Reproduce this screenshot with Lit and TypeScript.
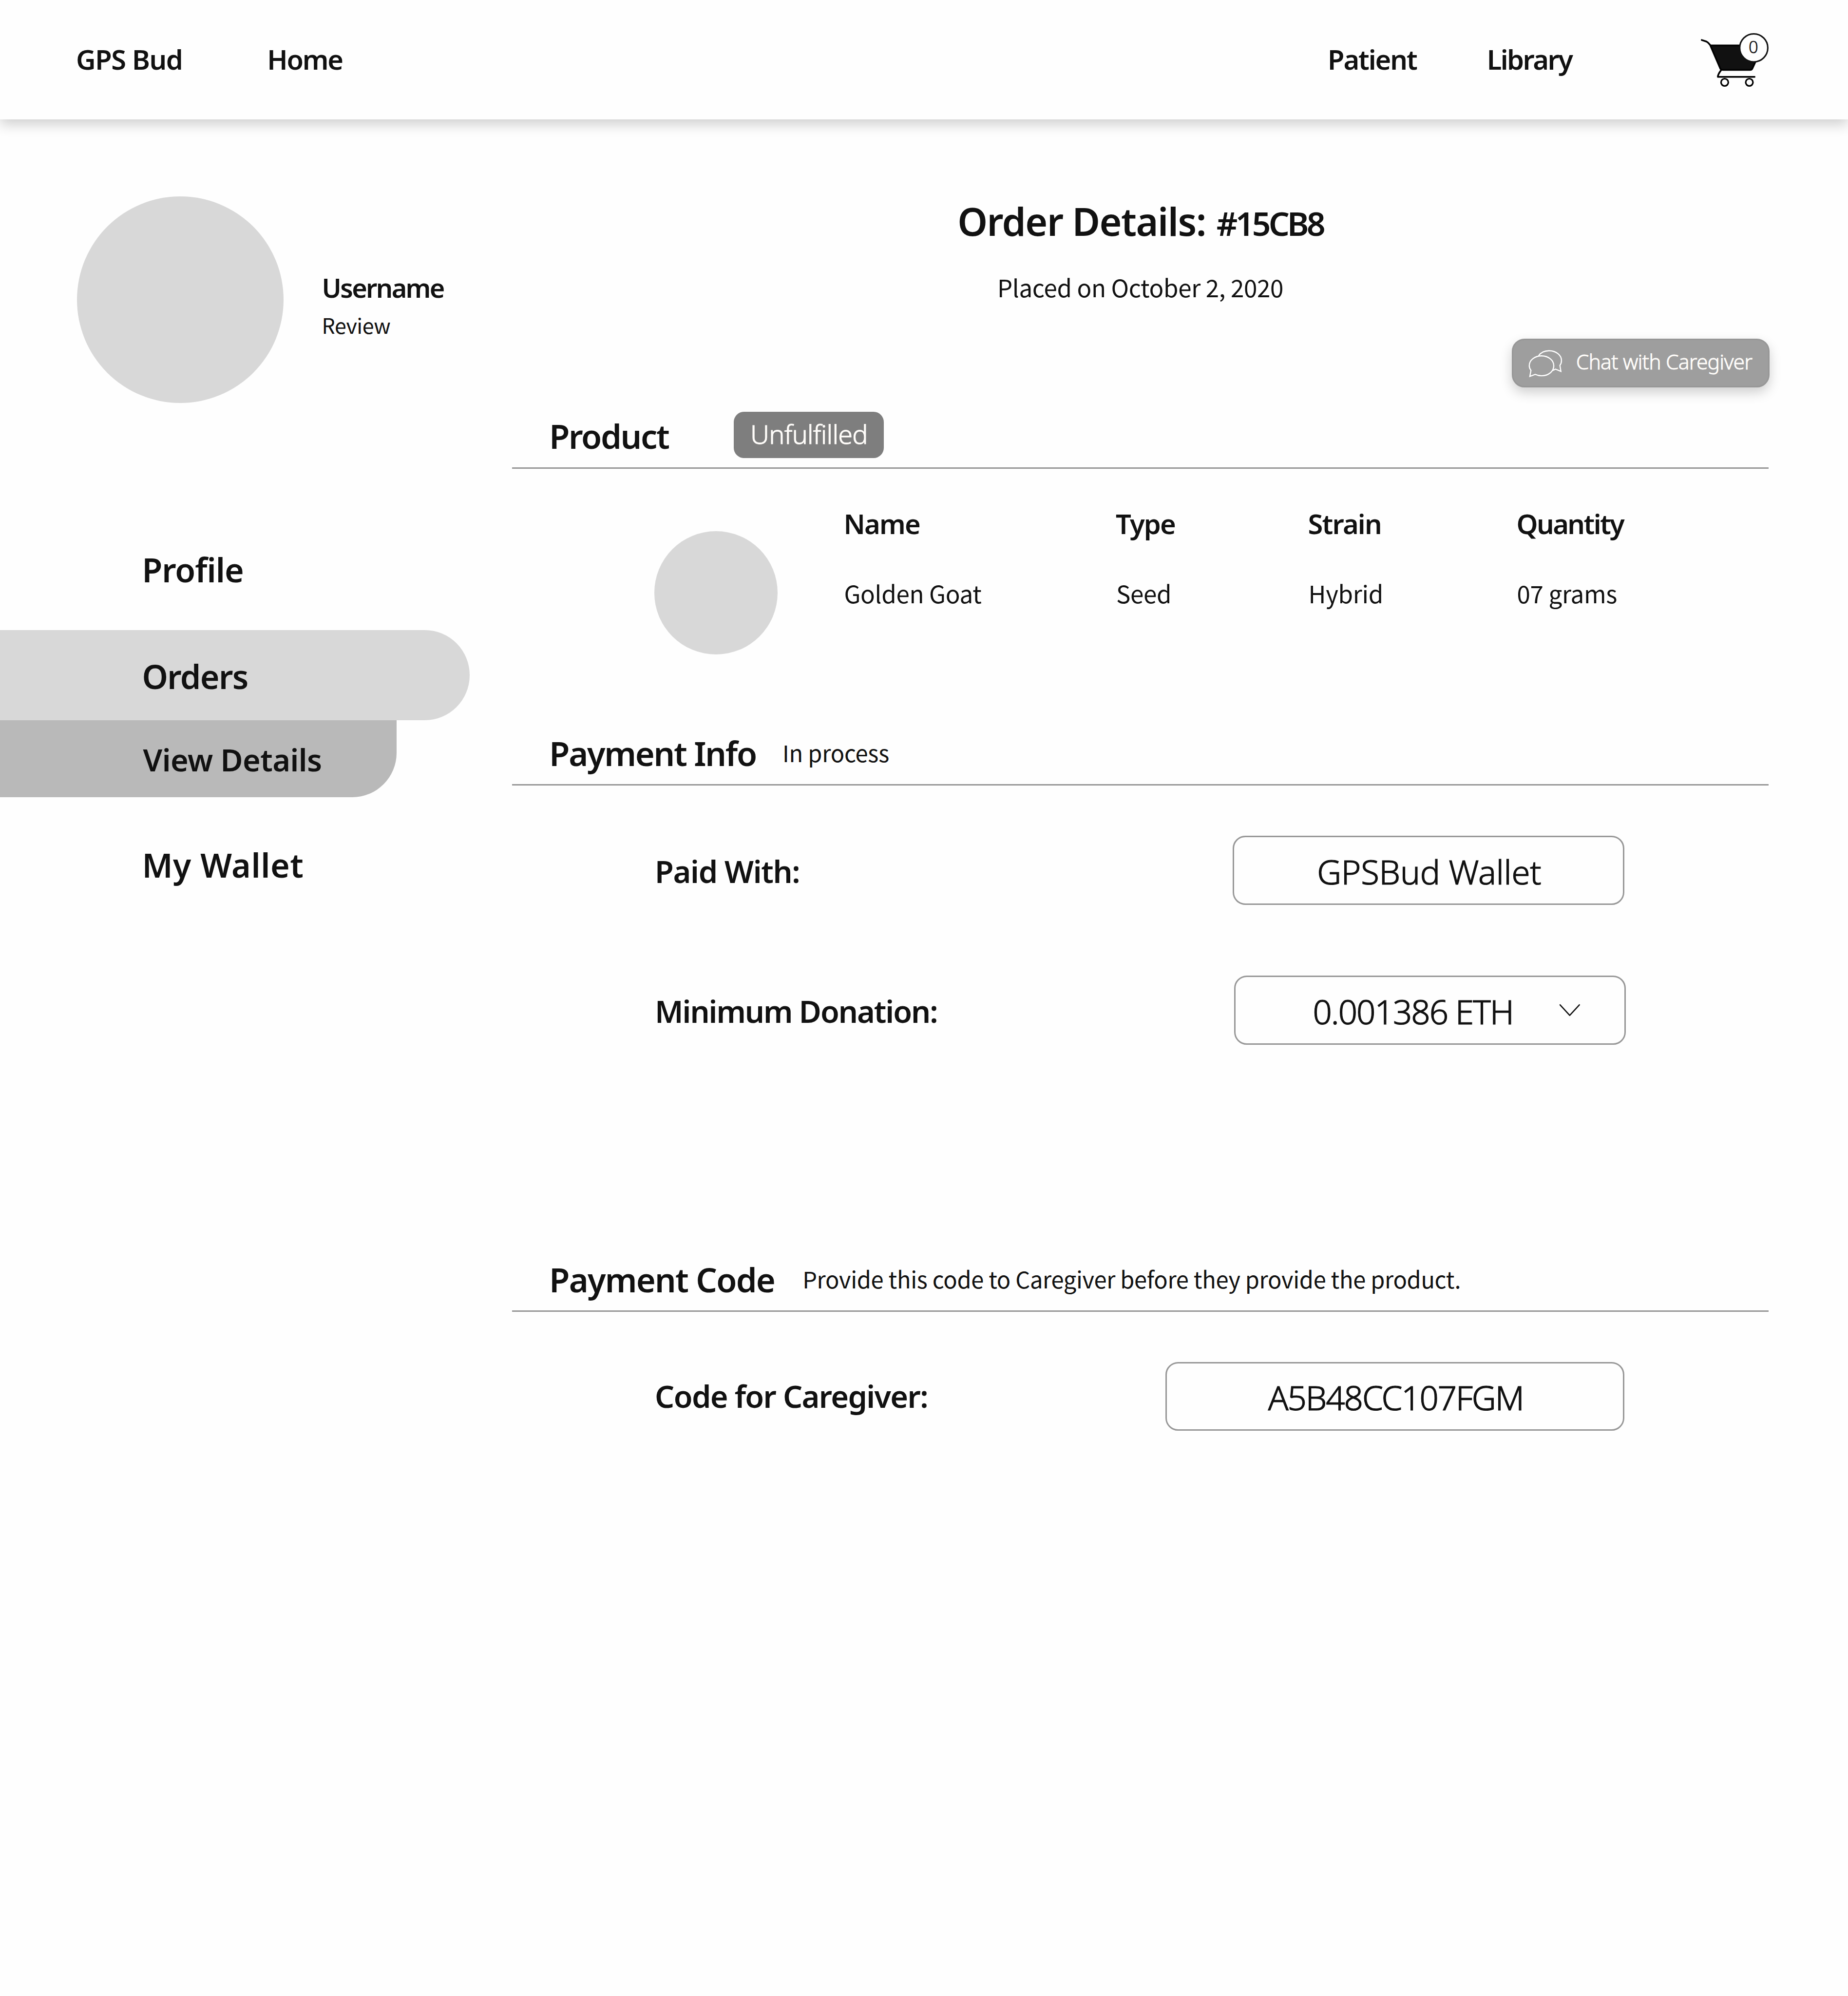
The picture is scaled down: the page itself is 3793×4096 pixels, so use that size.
import { LitElement, html, css, svg } from "lit";
import { customElement } from "lit/decorators.js";

const cartIcon = svg`
  <g stroke-linecap="round" stroke-linejoin="round" fill="none" stroke="#000" stroke-width="12">
    <path fill="#111" d="M175 170 H440 L490 285 L468 333 Q463 342 452 342 H262 Q249 342 244 336 Z" stroke="none" />
    <path d="M113 132 L146 143 Q156 147 172 167 L244 334 Q249 342 262 342 H452 Q463 342 468 333 L490 285" />
    <path d="M176 170 H390" />
    <path d="M248 345 Q226 374 226 391 H484" />
    <circle cx="274" cy="429" r="25.5" stroke-width="11" />
    <circle cx="447" cy="429" r="25.5" stroke-width="11" />
    <circle cx="478" cy="187.5" r="98.5" fill="#fefefe" stroke="#111" stroke-width="10.5" />
  </g>
  <text x="476" y="224" text-anchor="middle" class="count">0</text>`;

const chatIcon = svg`
  <g fill="none" stroke="#fff" stroke-width="8">
    <path d="M288 157 C303 134 330 121 362 121 C411 121 449 152 449 190 C449 203 446 213 438 224 L445 266 L407 250 C400 254 394 257 387 259" />
    <path d="M265 287 L227 301 L235 259 C226 247 223 237 223 226 C223 187 261 157 309 157 C357 157 395 188 395 227 C395 266 357 297 309 297 C293 297 278 293 265 287 Z" />
  </g>`;

@customElement("app-root")
export class AppRoot extends LitElement {
  static styles = css`
    :host {
      display: block;
      width: 3793px;
      height: 4096px;
      overflow: hidden;
      background: #fefefe;
      color: #111;
      font-family: "Noto Sans", "Open Sans", sans-serif;
      font-weight: 600;
      white-space: nowrap;
    }
    svg { display: block; flex: none; }
    .body-text {
      font-family: "Noto Sans CJK SC", "Noto Sans", sans-serif;
      font-weight: 400;
    }
    .light { font-weight: 300; -webkit-text-stroke: 0.018em currentColor; }

    .header {
      box-sizing: border-box;
      position: relative;
      display: flex;
      align-items: center;
      height: 245px;
      padding: 0 0 3.4px 156px;
      background: #fefefe;
      box-shadow: 0 10.5px 25px rgba(0, 0, 0, 0.19);
      font-size: 56px;
      line-height: 80px;
    }
    .brand { width: 392.3px; letter-spacing: -1.38px; }
    .home { letter-spacing: -2.25px; }
    .patient { margin-left: auto; width: 326.7px; letter-spacing: -2.05px; }
    .library { width: 434px; letter-spacing: -2.53px; }
    .cart { width: 149.3px; height: 122.9px; margin: 4px 158px 0 0; }
    .count {
      font-size: 118px;
      font-weight: 300;
      fill: #111;
      stroke: #111;
      stroke-width: 2px;
    }

    .page { display: flex; }
    .side { width: 1051.3px; flex: none; }
    .user { display: flex; align-items: center; gap: 78.3px; padding: 158px 0 0 158px; }
    .avatar { width: 424.3px; height: 424.3px; border-radius: 50%; background: #d8d8d8; flex: none; }
    .who { padding-top: 26px; line-height: 76px; }
    .name { font-size: 54px; letter-spacing: -2.68px; }
    .review { font-size: 43px; letter-spacing: -0.5px; }

    .nav { margin-top: 216.8px; font-size: 68px; }
    .item { box-sizing: border-box; display: flex; align-items: center; padding-left: 291.4px; }
    .profile { height: 249.2px; letter-spacing: -1px; }
    .orders {
      width: 964.1px;
      height: 184.4px;
      padding-top: 4px;
      background: #d8d8d8;
      border-radius: 0 92.2px 92.2px 0;
      letter-spacing: -1.63px;
    }
    .details {
      width: 814px;
      height: 158px;
      padding-top: 4px;
      padding-left: 293.6px;
      background: #b9b9b9;
      border-radius: 0 0 91px 0;
      font-size: 63px;
      letter-spacing: -0.6px;
    }
    .wallet { height: 278.6px; letter-spacing: 0.54px; }

    .main { width: 2578.4px; flex: none; display: flex; flex-direction: column; padding-top: 154.2px; }
    .title { display: flex; justify-content: center; align-items: baseline; gap: 21.8px; height: 110px; line-height: 110px; }
    .title-label { font-size: 78.7px; letter-spacing: -1.51px; }
    .title-id { font-size: 67.6px; letter-spacing: -4.72px; }
    .placed { margin-top: 45.3px; text-align: center; font-size: 49.3px; line-height: 70px; letter-spacing: -0.32px; }
    .chat {
      box-sizing: border-box;
      align-self: flex-end;
      display: flex;
      align-items: center;
      width: 529.6px;
      height: 100.1px;
      margin: 70.9px -2.6px 0 0;
      padding-left: 29px;
      border: 3px solid #979797;
      border-radius: 26px;
      background: #9e9e9e;
      box-shadow: 0 10.5px 25px rgba(0, 0, 0, 0.19);
      color: #fffdfa;
    }
    .chat-icon { width: 74.6px; height: 61.5px; }
    .chat-text { margin: 0 0 6.8px 25.4px; font-size: 42.7px; line-height: 60px; letter-spacing: -0.86px; }

    .head {
      display: flex;
      align-items: center;
      height: 126.2px;
      padding-left: 76px;
      border-bottom: 3px solid #979797;
      font-size: 68.5px;
      line-height: 96px;
    }
    .head-product { margin-top: 36.9px; letter-spacing: -2.34px; }
    .head-info { margin-top: 139.7px; letter-spacing: -2.25px; }
    .head-code { margin-top: 419.2px; letter-spacing: -1.75px; }
    .badge {
      box-sizing: border-box;
      display: flex;
      align-items: center;
      justify-content: center;
      width: 308px;
      height: 94.8px;
      margin: 0 0 5.2px 134px;
      padding-bottom: 5px;
      border-radius: 21px;
      background: #7e7e7e;
      color: #fffdfa;
      font-size: 54px;
      letter-spacing: -0.77px;
    }
    .note { margin: 0 0 4px 54px; font-size: 47px; line-height: 70px; letter-spacing: -0.22px; }
    .note.long { margin-left: 57px; letter-spacing: -0.31px; }

    .product { display: flex; gap: 135.4px; padding: 72.3px 0 0 291.7px; }
    .thumb { width: 253px; height: 253px; margin-top: 56.4px; border-radius: 50%; background: #d8d8d8; flex: none; }
    .table {
      display: grid;
      grid-template-columns: 558.6px 394.6px 428px auto;
      grid-template-rows: 80px 80px;
      row-gap: 62.9px;
      line-height: 80px;
    }
    .th { font-size: 56px; letter-spacing: -1.8px; }
    .th:nth-child(4) { letter-spacing: -2.59px; }
    .td { font-size: 49.3px; letter-spacing: -0.3px; padding-left: 1px; }

    .row {
      display: flex;
      align-items: center;
      justify-content: space-between;
      height: 141.8px;
      margin-top: 102.6px;
      padding: 0 295.5px 0 292.8px;
    }
    .row.second { margin-top: 145.3px; padding-right: 292.4px; }
    .label { padding-top: 4px; font-size: 63px; line-height: 88px; letter-spacing: -1.29px; }
    .label.donation { letter-spacing: -2.02px; }
    .label.code { padding-top: 0; letter-spacing: -1.64px; }
    .box {
      box-sizing: border-box;
      display: flex;
      align-items: center;
      justify-content: center;
      width: 804.7px;
      height: 141.8px;
      padding: 4px 0 0 3px;
      border: 3px solid #979797;
      border-radius: 26px;
      font-size: 68.9px;
      letter-spacing: -0.2px;
    }
    .select { justify-content: flex-start; padding-left: 158.8px; letter-spacing: -1.93px; }
    .wide { width: 941.9px; letter-spacing: -2.06px; }
    .chevron { width: 45.7px; height: 29px; margin: 0 0 3px 93.5px; }
  `;

  render() {
    return html`
      <header class="header">
        <span class="brand">GPS Bud</span>
        <span class="home">Home</span>
        <span class="patient">Patient</span>
        <span class="library">Library</span>
        <svg class="cart" viewBox="90 60 510 420">${cartIcon}</svg>
      </header>
      <div class="page">
        <aside class="side">
          <div class="user">
            <div class="avatar"></div>
            <div class="who">
              <div class="name">Username</div>
              <div class="review body-text">Review</div>
            </div>
          </div>
          <nav class="nav">
            <div class="item profile">Profile</div>
            <div class="item orders">Orders</div>
            <div class="item details">View Details</div>
            <div class="item wallet">My Wallet</div>
          </nav>
        </aside>
        <main class="main">
          <div class="title">
            <span class="title-label">Order Details:</span>
            <span class="title-id">#15CB8</span>
          </div>
          <div class="placed body-text">Placed on October 2, 2020</div>
          <div class="chat">
            <svg class="chat-icon" viewBox="210 105 255 210">${chatIcon}</svg>
            <span class="chat-text light">Chat with Caregiver</span>
          </div>

          <div class="head head-product">
            <span>Product</span>
            <span class="badge light">Unfulfilled</span>
          </div>
          <div class="product">
            <div class="thumb"></div>
            <div class="table">
              ${["Name", "Type", "Strain", "Quantity"].map((t) => html`<span class="th">${t}</span>`)}
              ${["Golden Goat", "Seed", "Hybrid", "07 grams"].map((t) => html`<span class="td body-text">${t}</span>`)}
            </div>
          </div>

          <div class="head head-info">
            <span>Payment Info</span>
            <span class="note body-text">In process</span>
          </div>
          <div class="row">
            <span class="label">Paid With:</span>
            <span class="box light">GPSBud Wallet</span>
          </div>
          <div class="row second">
            <span class="label donation">Minimum Donation:</span>
            <span class="box select light">
              0.001386 ETH
              <svg class="chevron" viewBox="0 0 52 33">
                <path d="M3.5 3.5 L26 28 L48.5 3.5" fill="none" stroke="#111" stroke-width="3" stroke-linecap="round" stroke-linejoin="round" />
              </svg>
            </span>
          </div>

          <div class="head head-code">
            <span>Payment Code</span>
            <span class="note long body-text">Provide this code to Caregiver before they provide the product.</span>
          </div>
          <div class="row">
            <span class="label code">Code for Caregiver:</span>
            <span class="box wide light">A5B48CC107FGM</span>
          </div>
        </main>
      </div>
    `;
  }
}
